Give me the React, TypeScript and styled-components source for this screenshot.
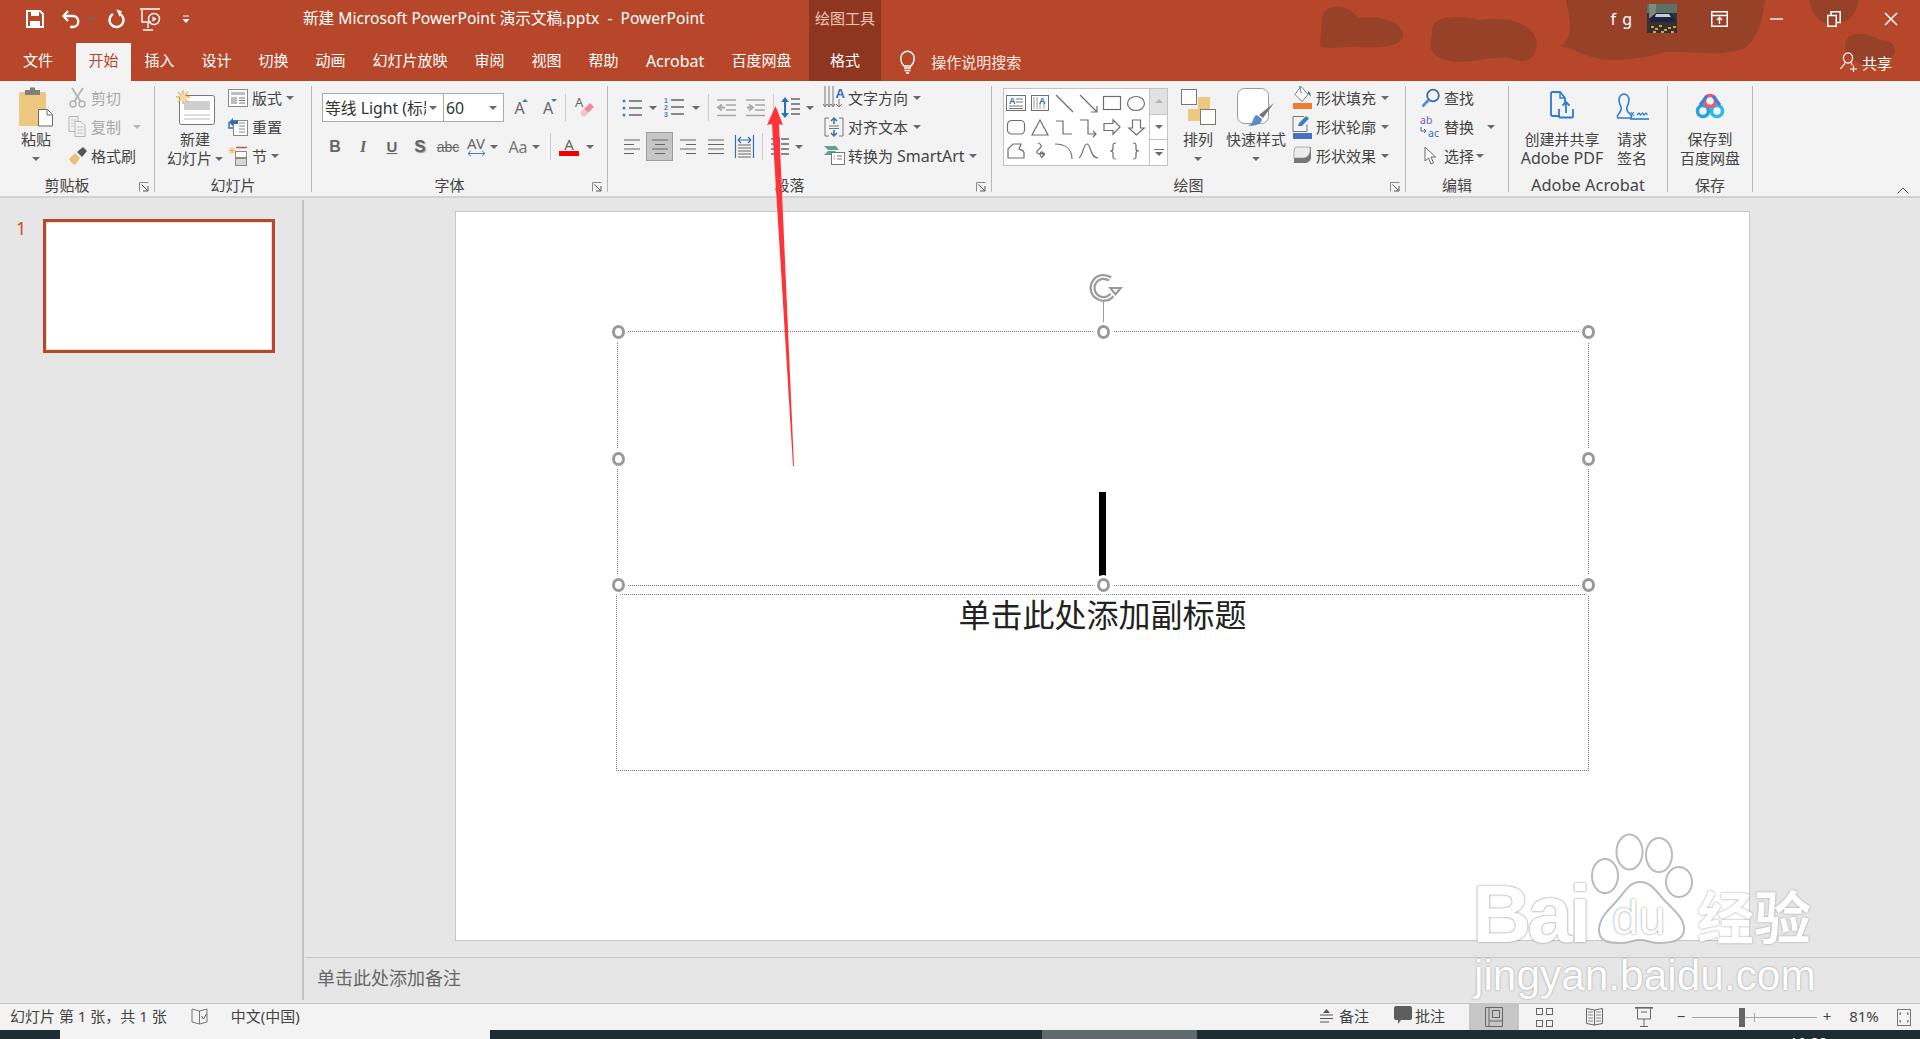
import React from "react";
import styled, { createGlobalStyle } from "styled-components";

const Global = createGlobalStyle`
  html, body { margin: 0; padding: 0; height: 100%; overflow: hidden; background: #e6e6e6; }
  #root { height: 100%; }
  * { box-sizing: border-box; }
`;

const Page = styled.div`
  position: relative; width: 100%; height: 100vh; display: flex; flex-direction: column; overflow: hidden;
  font-family: "Noto Sans", "Noto Sans CJK SC", sans-serif; font-size: 15px; color: #444;
`;
const Header = styled.header`position: relative; height: 81px; background: #b7472a; color: #fff; flex: none;`;
const HeaderArt = styled.svg`position: absolute; left: 0; top: 0; width: 100%; height: 81px;`;
const TitleRow = styled.div`position: relative; height: 43px; display: flex; align-items: stretch;`;
const Qat = styled.div`width: 303px; display: flex; align-items: center; padding-left: 26px; padding-bottom: 5px;`;
const QatSlot = styled.span<{ $ml?: number }>`margin-left: ${(p) => p.$ml ?? 0}px; display: flex; flex: none;`;
const TitleText = styled.div`width: 506px; font-size: 15.6px; line-height: 37px; white-space: pre;`;
const ContextLabel = styled.div`width: 72px; background: #8f3620; color: #f2c7b8; text-align: center; line-height: 37px; font-size: 15px;`;
const Spacer = styled.div`flex: 1;`;
const Account = styled.div`display: flex; align-items: center; padding-bottom: 6px; font-size: 16px;`;
const AccountName = styled.span`margin-right: 14px; letter-spacing: 1px;`;
const WinControls = styled.div`display: flex; margin-left: 14px; padding-right: 1px; padding-bottom: 6px;`;
const WinBtn = styled.div`width: 57px; display: flex; align-items: center; justify-content: center;`;
const TabRow = styled.nav`position: relative; height: 38px; display: flex; align-items: stretch;`;
const Tab = styled.div<{ $active?: boolean; $context?: boolean; $w?: number; $ml?: number; $latin?: boolean }>`
  display: flex; align-items: center; justify-content: center; white-space: nowrap; line-height: 1;
  padding: 0 13.5px 3px; font-size: ${(p) => (p.$latin ? 16 : 15)}px;
  ${(p) => (p.$w ? `width:${p.$w}px; padding:0 0 3px;` : "")}
  ${(p) => (p.$ml ? `margin-left:${p.$ml}px;` : "")}
  ${(p) => (p.$active ? "background:#f3f3f3;color:#b7472a;" : "")}
  ${(p) => (p.$context ? "background:#8f3620;" : "")}
`;
const TellMe = styled.div`display: flex; align-items: center; margin-left: 19px; padding-bottom: 1px; gap: 16px; font-size: 15px; color: #fbe9e2;`;
const ShareBtn = styled.div`display: flex; align-items: center; gap: 4px; margin-left: auto; padding-right: 28px; font-size: 15px;`;

const Ribbon = styled.section`height: 117px; flex: none; background: #f3f3f3; border-bottom: 2px solid #d2d2d2; display: flex; position: relative;`;
const Group = styled.div<{ $w: number }>`width: ${(p) => p.$w}px; flex: none; display: flex; flex-direction: column; height: 115px;`;
const GroupBody = styled.div<{ $pl?: number }>`height: 93px; flex: none; display: flex; align-items: flex-start; padding-left: ${(p) => p.$pl ?? 0}px;`;
const GroupFoot = styled.div`flex: 1; display: flex; align-items: center; height: 22px;`;
const GroupLabel = styled.div<{ $latin?: boolean }>`flex: 1; text-align: center; font-size: ${(p) => (p.$latin ? 16.4 : 15)}px; line-height: 20px; white-space: nowrap; margin-top: -1px;`;
const LauncherSlot = styled.div`width: 20px; display: flex; justify-content: center; padding-top: 3px; flex: none;`;
const Sep = styled.div`width: 1px; height: 106px; margin-top: 5px; background: #b9b9b9; flex: none;`;

const LargeBtn = styled.div<{ $w: number; $ml?: number }>`
  width: ${(p) => p.$w}px; margin-left: ${(p) => p.$ml ?? 0}px; flex: none;
  display: flex; flex-direction: column; align-items: center; padding-top: 3px;
`;
const LargeIcon = styled.div`height: 46px; display: flex; align-items: center; justify-content: center;`;
const Line = styled.div`height: 19px; line-height: 19px; font-size: 15px; white-space: nowrap; display: flex; align-items: center; color: #444;`;
const Latin = styled.span`font-size: 16px;`;
const SmallCol = styled.div<{ $ml?: number }>`margin-left: ${(p) => p.$ml ?? 0}px; padding-top: 2px; display: flex; flex-direction: column; flex: none;`;
const SmallRow = styled.div<{ $dim?: boolean }>`height: 29px; display: flex; align-items: center; gap: 4px; font-size: 15px; white-space: nowrap; color: ${(p) => (p.$dim ? "#a8a8a8" : "#444")};`;
const IconSlot = styled.span<{ $w?: number }>`width: ${(p) => p.$w ?? 20}px; display: flex; justify-content: center; align-items: center; flex: none;`;
const Caret = styled.i<{ $ml?: number; $dim?: boolean }>`
  display: inline-block; width: 0; height: 0; flex: none; margin-left: ${(p) => p.$ml ?? 0}px;
  border-left: 4px solid transparent; border-right: 4px solid transparent;
  border-top: 4px solid ${(p) => (p.$dim ? "#b5b5b5" : "#6a6a6a")};
`;
const ToolStack = styled.div`display: flex; flex-direction: column; padding-top: 12px; gap: 10px; flex: none;`;
const ToolRow = styled.div`height: 29px; display: flex; align-items: center;`;
const Tool = styled.span<{ $w: number; $ml?: number }>`
  width: ${(p) => p.$w}px; margin-left: ${(p) => p.$ml ?? 0}px; height: 29px; flex: none;
  display: flex; align-items: center; justify-content: center; position: relative; color: #666;
`;
const ToolOn = styled(Tool)`background: #c6c6c6; border: 1px solid #9c9c9c;`;
const ToolSep = styled.span<{ $ml: number }>`width: 1px; height: 27px; background: #c9c9c9; margin-left: ${(p) => p.$ml}px; flex: none;`;
const Combo = styled.div<{ $w: number }>`
  width: ${(p) => p.$w}px; height: 29px; background: #fff; border: 1px solid #ababab; flex: none; margin-right: -1px;
  display: flex; align-items: center; justify-content: space-between; padding: 0 6px 0 2px; font-size: 15.8px; color: #333; white-space: nowrap; overflow: hidden;
`;
const ComboText = styled.span`display: block; overflow: hidden; flex: 1;`;
const FaceB = styled.span`font: bold 16px "Liberation Sans", sans-serif; color: #666;`;
const FaceI = styled.span`font: italic bold 16px "Liberation Serif", serif; color: #666;`;
const FaceU = styled.span`font: bold 15px "Liberation Sans", sans-serif; color: #666; text-decoration: underline;`;
const FaceS = styled.span`font: bold 17px "Liberation Sans", sans-serif; color: #666; text-shadow: 1px 1px 1px #999;`;
const FaceAbc = styled.span`font: 14px "Liberation Sans", sans-serif; color: #666; text-decoration: line-through;`;
const FaceAa = styled.span`font: 16px "Noto Sans", sans-serif; color: #777;`;
const FaceGrow = styled.span`font: 16px "Noto Sans", sans-serif; color: #666;`;
const FaceColumn = styled.span`display: flex; flex-direction: column; align-items: center; font: 15px/14px "Noto Sans", sans-serif; color: #666;`;
const RedBar = styled.span`display: block; width: 20px; height: 5px; background: #f00000;`;
const BlueTri = styled.i<{ $down?: boolean }>`
  position: absolute; top: 6px; left: 60%; width: 0; height: 0;
  border-left: 3px solid transparent; border-right: 3px solid transparent;
  ${(p) => (p.$down ? "border-top: 3px solid #3f78b5;" : "border-bottom: 3px solid #3f78b5;")}
`;
const Gallery = styled.div`width: 165px; height: 78px; margin-top: 7px; display: flex; background: #fff; border: 1px solid #c4c4c4; flex: none;`;
const GalleryGrid = styled.div`width: 145px; padding: 2px 0 0 0; display: grid; grid-template-columns: repeat(6, 24px); grid-auto-rows: 24px; justify-items: center; align-items: center;`;
const GalleryScroll = styled.div`flex: 1; display: flex; flex-direction: column; border-left: 1px solid #c4c4c4;`;
const ScrollBtn = styled.div<{ $off?: boolean }>`
  flex: 1; display: flex; flex-direction: column; gap: 2px; align-items: center; justify-content: center;
  border-top: 1px solid #c4c4c4; &:first-child { border-top: 0; }
  ${(p) => (p.$off ? "background:#e2e2e2;" : "")}
`;
const UpCaret = styled.i`width: 0; height: 0; border-left: 4px solid transparent; border-right: 4px solid transparent; border-bottom: 4px solid #b5b5b5;`;
const BarMark = styled.i`width: 10px; height: 1px; background: #777;`;
const CollapseBtn = styled.div`position: absolute; right: 11px; bottom: 2px;`;

const Workspace = styled.div`flex: 1; display: flex; min-height: 0; background: #e6e6e6;`;
const ThumbPane = styled.aside`width: 302px; flex: none; display: flex; align-items: flex-start; padding-top: 21px;`;
const ThumbNum = styled.div`width: 27px; margin-left: 16px; color: #c9502e; font-size: 18px; line-height: 18px;`;
const Thumb = styled.div`width: 232px; height: 134px; background: #fff; border: 3px solid #b7472a; box-shadow: inset 0 0 0 1px #e0e0e0;`;
const PaneDivider = styled.div`width: 2px; margin: 2px 0 3px; background: #c4c4c4; flex: none;`;
const EditPane = styled.main`flex: 1; display: flex; flex-direction: column; min-width: 0;`;
const SlideArea = styled.div`flex: 1; padding: 13px 0 0 151px; min-height: 0;`;
const Slide = styled.div`position: relative; width: 1295px; height: 730px; background: #fff; border: 1px solid #c6c6c6;`;
const Placeholder = styled.div<{ $l: number; $t: number; $w: number; $h: number }>`
  position: absolute; left: ${(p) => p.$l}px; top: ${(p) => p.$t}px; width: ${(p) => p.$w}px; height: ${(p) => p.$h}px;
  border: 1px dotted #777;
`;
const SubtitleText = styled.div`text-align: center; font-size: 32px; line-height: 40px; color: #222;`;
const TextCursor = styled.div`position: absolute; left: 481px; top: 160px; width: 7px; height: 85px; background: #000;`;
const Handle = styled.i<{ $x: number; $y: number }>`
  position: absolute; left: ${(p) => p.$x}%; top: ${(p) => p.$y}%; width: 13px; height: 14px; margin: -7px 0 0 -6px;
  background: #fff; border: 3px solid #999; border-radius: 50%; box-shadow: 0 0 0 3px #fff;
`;
const RotateStem = styled.i`position: absolute; left: 485px; top: -31px; width: 1px; height: 26px; background: #9a9a9a;`;
const RotateGrip = styled.span`position: absolute; left: 472px; top: -58px; display: flex;`;
const Notes = styled.div`height: 46px; flex: none; border-top: 1px solid #c6c6c6; margin-left: 1px; padding-left: 12px; font-size: 18px; line-height: 40px; color: #666;`;

const StatusBar = styled.footer`height: 27px; flex: none; background: #f3f3f3; border-top: 1px solid #c6c6c6; display: flex; align-items: stretch; font-size: 15px; color: #444;`;
const StatusItem = styled.div<{ $ml?: number; $gap?: number; $w?: number; $text?: boolean }>`
  display: flex; align-items: center; flex: none; white-space: pre; margin-left: ${(p) => p.$ml ?? 0}px; gap: ${(p) => p.$gap ?? 0}px;
  ${(p) => (p.$w ? `width:${p.$w}px; justify-content:center;` : "")}
  ${(p) => (p.$text ? "padding-bottom: 3px;" : "")}
`;
const ViewBtn = styled.div<{ $active?: boolean }>`width: 50px; height: 100%; display: flex; align-items: center; justify-content: center; flex: none; ${(p) => (p.$active ? "background:#c6c6c6;" : "")}`;
const ZoomTrack = styled.div`width: 125px; height: 1px; background: #a8a8a8; position: relative; align-self: center; margin-left: 6px; flex: none;`;
const ZoomThumb = styled.i`position: absolute; left: 47px; top: -9px; width: 6px; height: 19px; background: #666;`;
const ZoomTick = styled.i`position: absolute; left: 62px; top: -4px; width: 1px; height: 9px; background: #aaa;`;
const Taskbar = styled.div`height: 9px; flex: none; background: #1e2c34; display: flex; position: relative;`;
const TaskSeg = styled.div<{ $w: number; $ml: number; $bg: string }>`width: ${(p) => p.$w}px; margin-left: ${(p) => p.$ml}px; background: ${(p) => p.$bg}; flex: none;`;
const Clock = styled.span`position: absolute; left: 1790px; top: 5px; color: #fff; font-size: 13px; line-height: 14px; letter-spacing: 1px;`;

const ArrowOverlay = styled.svg`position: absolute; left: 760px; top: 100px; pointer-events: none;`;
const Watermark = styled.div`position: absolute; left: 1470px; top: 830px; width: 360px; height: 170px; pointer-events: none; color: #fff;`;
const WmPaw = styled.svg`position: absolute; left: 0; top: 0;`;
const WmBai = styled.span`position: absolute; left: 2px; top: 43px; font: bold 82px/82px "Liberation Sans", sans-serif; letter-spacing: -4px; text-shadow: 0 0 2px #888, 0 0 1px #999;`;
const WmDu = styled.span`position: absolute; left: 142px; top: 64px; font: 48px/48px "Liberation Sans", sans-serif; color: #fff; text-shadow: 0 0 2px #777;`;
const WmJing = styled.span`position: absolute; left: 227px; top: 48px; font: bold 57px/72px "Noto Sans CJK SC", sans-serif; text-shadow: 0 0 2px #888; white-space: nowrap;`;
const WmUrl = styled.span`position: absolute; left: 4px; top: 122px; font: 42.4px/48px "Liberation Sans", sans-serif; white-space: nowrap; text-shadow: 0 0 2px #888;`;

const SvgBase = styled.svg`display: block; flex: none; overflow: visible;`;
const I: React.FC<{ w: number; h: number; children: React.ReactNode }> = ({ w, h, children }) => (
  <SvgBase width={w} height={h} viewBox={`0 0 ${w} ${h}`} fill="none">{children}</SvgBase>
);

const IconSave = () => (
  <I w={18} h={18}>
    <path d="M1 1h13l3 3v13H1z" stroke="#fff" strokeWidth="2" />
    <path d="M5 1h8v5H5z" fill="#fff" />
    <path d="M4 11h10v6H4z" fill="#fff" />
  </I>
);
const IconUndo = () => (
  <I w={20} h={20}>
    <path d="M7 2L2.5 7 7 12" stroke="#fff" strokeWidth="2.4" />
    <path d="M3 7h9c7 0 7 11 0 11H9" stroke="#fff" strokeWidth="2.4" />
  </I>
);
const IconRedo = () => (
  <I w={17} h={20}>
    <path d="M6 5A7 7 0 1 0 12 4.5" stroke="#fff" strokeWidth="2.4" />
    <path d="M8 1h6v6z" fill="#fff" transform="rotate(20 11 4)" />
  </I>
);
const IconShow = () => (
  <I w={21} h={23}>
    <path d="M0 1h20M2 1v13h9" stroke="#fff" strokeWidth="1.4" />
    <circle cx="14" cy="11" r="5.5" stroke="#fff" strokeWidth="1.4" />
    <path d="M12.5 8.2l4 2.8-4 2.8z" fill="#fff" />
    <path d="M8 15v5M3 22h10" stroke="#fff" strokeWidth="1.4" />
  </I>
);
const IconCustom = () => (
  <I w={10} h={9}>
    <path d="M2 1h6" stroke="#fff" />
    <path d="M1.5 4h7L5 8z" fill="#fff" />
  </I>
);
const IconRibbonDisp = () => (
  <I w={17} h={16}>
    <rect x=".75" y=".75" width="15.5" height="14.5" stroke="#fff" strokeWidth="1.5" />
    <path d="M1 4.5h15" stroke="#fff" strokeWidth="1.5" />
    <path d="M8.5 13V7M6 9l2.5-2.5L11 9" stroke="#fff" strokeWidth="1.4" />
  </I>
);
const IconMin = () => <I w={13} h={2}><path d="M0 1h13" stroke="#fff" strokeWidth="1.4" /></I>;
const IconRestore = () => (
  <I w={14} h={16}>
    <path d="M.75 4.5h8.5v10.7H.75z" stroke="#fff" strokeWidth="1.5" />
    <path d="M4 4.5V.75h9.2v10.7h-4" stroke="#fff" strokeWidth="1.5" />
  </I>
);
const IconClose = () => <I w={14} h={14}><path d="M1 1l12 12M13 1L1 13" stroke="#fff" strokeWidth="1.5" /></I>;
const IconBulb = () => (
  <I w={15} h={24}>
    <path d="M4 16C1 13 .8 11 .8 8a6.7 6.7 0 0 1 13.4 0c0 3-.2 5-3.2 8z" stroke="#fff" strokeWidth="1.4" />
    <path d="M4 18h7M4.5 20.5h6M6 23h3" stroke="#fff" strokeWidth="1.4" />
  </I>
);
const IconShare = () => (
  <I w={18} h={20}>
    <ellipse cx="8" cy="6" rx="4.6" ry="5.2" stroke="#fff" strokeWidth="1.2" />
    <path d="M5 10.5c-.5 3-3 3.5-4.5 6.5M11 10.5c.2 1 .7 1.8 1.3 2.5" stroke="#fff" strokeWidth="1.2" />
    <path d="M10 17h7M13.5 13.5v6.5" stroke="#fff" strokeWidth="1.2" />
  </I>
);

const IconPaste = () => (
  <I w={36} h={40}>
    <rect x="1" y="5" width="27" height="34" rx="1.5" fill="#edc87e" />
    <path d="M7 5V3h5V.5h5V3h5v5H7z" fill="#7f7f7f" />
    <path d="M20.5 22.5h9l5 5v11.5h-14z" fill="#fff" stroke="#6a6a6a" />
    <path d="M29 23v5h5" stroke="#6a6a6a" />
  </I>
);
const IconCut = () => (
  <I w={17} h={21}>
    <path d="M3 1l9 14M14 1L5 15" stroke="#b4b4b4" strokeWidth="1.8" />
    <circle cx="4" cy="17" r="3" stroke="#b4b4b4" strokeWidth="1.5" />
    <circle cx="13" cy="17" r="3" stroke="#b4b4b4" strokeWidth="1.5" />
  </I>
);
const IconCopy = () => (
  <I w={18} h={21}>
    <path d="M1 .5h9v15H1z" fill="#f3f3f3" stroke="#b4b4b4" />
    <path d="M7 5.5h6l4 4V20.5H7z" fill="#f3f3f3" stroke="#b4b4b4" />
    <path d="M3 4h5M3 7h3M3 10h3M9 11h6M9 14h6M9 17h6" stroke="#c4c4c4" />
  </I>
);
const IconPainter = () => (
  <I w={19} h={20}>
    <path d="M1 13l6-6 5 5-5 7c-2-1-5-3-6-6z" fill="#e8c27c" />
    <path d="M9 6l6-5 4 4-5 6z" fill="#555" />
  </I>
);
const IconNewSlide = () => (
  <I w={39} h={35}>
    <rect x="3.5" y="5.5" width="35" height="29" rx="2" fill="#fff" stroke="#777" />
    <path d="M8 11h26v9H8z" fill="#cfcfcf" />
    <path d="M8 25h26M8 29h26" stroke="#bbb" />
    <g stroke="#eeb75e" strokeWidth="1.5">
      <path d="M7 0v14M0 7h14M2 2l10 10M12 2L2 12" />
    </g>
    <circle cx="7" cy="7" r="3" fill="#f7dba8" />
  </I>
);
const IconLayout = () => (
  <I w={20} h={18}>
    <rect x=".5" y=".5" width="19" height="17" fill="#fff" stroke="#888" />
    <path d="M3 3h14v3H3zM3 8h6v7H3z" fill="#bdbdbd" />
    <path d="M11 9h6M11 11.5h6M11 14h6" stroke="#777" />
  </I>
);
const IconReset = () => (
  <I w={20} h={19}>
    <rect x="5.5" y="3.5" width="14" height="15" fill="#fff" stroke="#888" />
    <path d="M11 6h6M11 9h6M11 12h6M11 15h6" stroke="#888" />
    <path d="M1 5l4-4v2.5h5V7H5v2.5z" fill="#2f6fb3" />
    <path d="M1 5v6h4" stroke="#2f6fb3" strokeWidth="1.5" />
  </I>
);
const IconSection = () => (
  <I w={20} h={20}>
    <g stroke="#eeb75e"><path d="M4 1v7M.5 4.5h7M1.5 2l5 5M6.5 2l-5 5" /></g>
    <path d="M8 1.5h11" stroke="#c8553a" strokeWidth="1.5" />
    <rect x="7.5" y="5.5" width="11" height="6" fill="#fff" stroke="#888" />
    <rect x="7.5" y="12.5" width="11" height="7" fill="#d8d8d8" stroke="#888" />
  </I>
);
const IconClear = () => (
  <I w={20} h={23}>
    <text x="1" y="11" fontSize="13" fill="#666" fontFamily="Noto Sans">A</text>
    <path d="M7 16l9-9 4 4-9 9c-2 1-4-1-4-4z" fill="#ec8c9c" />
    <path d="M7 16l3-3 5 4-4 3c-2 1-4 0-4-4z" fill="#f5c6cc" />
  </I>
);
const Launcher = () => (
  <I w={10} h={10}>
    <path d="M.5 9.5V.5h9" stroke="#8a8a8a" />
    <path d="M2.5 2.5l6 6M4 9h5V4" stroke="#555" />
  </I>
);
const listLines = (x: number) => (
  <path d={`M${x} 2h13M${x} 9h13M${x} 16h13`} stroke="#666" strokeWidth="1.3" />
);
const IconBullets = () => (
  <I w={20} h={18}>
    <g fill="#3e7fc1"><circle cx="2" cy="2" r="1.5" /><circle cx="2" cy="9" r="1.5" /><circle cx="2" cy="16" r="1.5" /></g>
    {listLines(7)}
  </I>
);
const IconNumbers = () => (
  <I w={20} h={19}>
    <g fill="#3e7fc1" fontSize="7" fontFamily="Liberation Sans" fontWeight="bold">
      <text x="0" y="5">1</text><text x="0" y="12">2</text><text x="0" y="19">3</text>
    </g>
    {listLines(7)}
  </I>
);
const IconIndent = ({ flip }: { flip?: boolean }) => (
  <I w={19} h={18}>
    <path d="M0 1h19M9 6h10M9 11h10M0 16.5h19" stroke="#a8a8a8" strokeWidth="1.3" />
    <path d={flip ? "M1 8.5h4M3 5.5l4 3-4 3" : "M8 8.5H3M5 5.5l-4 3 4 3"} stroke="#a8a8a8" strokeWidth="1.8" />
  </I>
);
const IconLineSpacing = () => (
  <I w={19} h={23}>
    <path d="M4 1L0 6h8zM4 22L0 17h8z" fill="#2f6fb3" />
    <path d="M4 5v13" stroke="#2f6fb3" strokeWidth="2" />
    <path d="M10 3h9M10 8h9M10 13h9M10 18h9" stroke="#666" strokeWidth="1.3" />
  </I>
);
const IconAlign = ({ kind }: { kind: "l" | "c" | "r" | "j" }) => {
  const rows = [0, 1, 2, 3].map((i) => {
    const w = kind === "j" ? 16 : i % 2 ? 10 : 16;
    const x = kind === "c" ? (16 - w) / 2 : kind === "r" ? 16 - w : 0;
    return `M${x} ${1 + i * 4.5}h${w}`;
  });
  return <I w={16} h={16}><path d={rows.join("")} stroke="#666" strokeWidth="1.2" /></I>;
};
const IconDistribute = () => (
  <I w={19} h={23}>
    <path d="M.5 0v23M18.5 0v23" stroke="#2f6fb3" strokeWidth="1.2" />
    <path d="M3 5h13M3 5l3-3M3 5l3 3M16 5l-3-3M16 5l-3 3" stroke="#2f6fb3" strokeWidth="1.2" />
    <path d="M3 10h13M3 13h13M3 16h13M3 19h13M3 22h13" stroke="#666" />
  </I>
);
const IconColumns = () => (
  <I w={18} h={17}>
    <path d="M0 1h7M0 6h7M0 11h7M0 16h7" stroke="#3e7fc1" strokeWidth="1.3" />
    <path d="M10 1h8M10 6h8M10 11h8M10 16h8" stroke="#666" strokeWidth="1.3" />
    <path d="M8.5 0v17" stroke="#777" />
  </I>
);
const IconTextDir = () => (
  <I w={20} h={23}>
    <path d="M1 0v20M5 0v20M9 0v20" stroke="#777" />
    <path d="M-1 18l2 3 2-3M3 18l2 3 2-3M7 18l2 3 2-3M12 18l3 3 3-3" stroke="#777" />
    <text x="11.5" y="12" fontSize="13" fontWeight="bold" fill="#2f6fb3" fontFamily="Liberation Sans">A</text>
    <path d="M15 13v7" stroke="#777" />
  </I>
);
const IconAlignText = () => (
  <I w={20} h={20}>
    <path d="M5 1H1v18h4M15 1h4v18h-4" stroke="#777" />
    <path d="M10 2v5M10 13v5" stroke="#2f6fb3" strokeWidth="1.5" />
    <path d="M7 4l3-3 3 3M7 16l3 3 3-3" stroke="#2f6fb3" strokeWidth="1.5" />
    <path d="M5 9h10M5 11.5h10" stroke="#777" />
  </I>
);
const IconSmartArt = () => (
  <I w={21} h={19}>
    <path d="M0 0h12l3 4H4zM0 9h9l3-4H4z" fill="#5ea293" />
    <rect x="7.5" y="6.5" width="13" height="12" fill="#fff" stroke="#777" />
    <path d="M10 10h1M13 10h5M10 13h1M13 13h5" stroke="#777" />
  </I>
);
const IconFill = () => (
  <I w={20} h={24}>
    <path d="M9 .5l7 8-6 7-7-7z" fill="#fff" stroke="#777" />
    <path d="M7 0c1 2 2 4 2 7" stroke="#777" />
    <path d="M16 5c2 1 3 3 2.5 6-.5-1-1.5-3-2.5-3z" fill="#2f6fb3" />
    <path d="M1 17h19v6H1z" fill="#ed7d31" />
  </I>
);
const IconOutline = () => (
  <I w={20} h={24}>
    <path d="M12 1.5H1v15h14v-7" stroke="#777" />
    <path d="M6 11l1-3L14 1l3 2.5-7 7.5z" fill="#3e7fc1" />
    <path d="M1 18h19v6H1z" fill="#4472c4" />
  </I>
);
const IconEffect = () => (
  <I w={19} h={19}>
    <path d="M4 1h14v10c0 4-3 6-7 6H1V6c0-3 1-5 3-5z" fill="#777" />
    <path d="M4 1h13c1 5-1 10-6 11H1V6c0-3 1-5 3-5z" fill="#ececec" stroke="#888" strokeWidth=".6" />
  </I>
);
const IconFind = () => (
  <I w={19} h={20}>
    <circle cx="12" cy="7.5" r="5.8" stroke="#2f6fb3" strokeWidth="1.8" />
    <path d="M7.5 12L1.5 18.5" stroke="#5c8ec2" strokeWidth="2.8" />
  </I>
);
const IconReplace = () => (
  <I w={21} h={21}>
    <text x="0" y="8" fontSize="10.5" fill="#7a5ba6" fontFamily="Noto Sans">ab</text>
    <text x="8" y="21" fontSize="10.5" fill="#2f6fb3" fontFamily="Noto Sans">ac</text>
    <path d="M1 11v4h5M4 13l2 2-2 2" stroke="#2f6fb3" />
  </I>
);
const IconSelect = () => (
  <I w={12} h={19}>
    <path d="M1 1v14l3.5-3L7 18l2.5-1.2L7 11h4.5z" fill="#fff" stroke="#666" />
  </I>
);
const IconArrange = () => (
  <I w={35} h={36}>
    <rect x="17" y="8" width="12" height="12" fill="#edc87e" />
    <rect x="7" y="20" width="12" height="12" fill="#edc87e" />
    <rect x=".5" y=".5" width="15" height="15" fill="#fff" stroke="#777" />
    <rect x="19.5" y="20.5" width="15" height="15" fill="#fff" stroke="#777" />
  </I>
);
const IconQuickStyle = () => (
  <I w={38} h={38}>
    <rect x=".5" y=".5" width="31" height="35" rx="7" fill="#fff" stroke="#999" />
    <path d="M37 15l-11 15-4-3z" fill="#777" />
    <path d="M20 27l5 4c0 4-4 7-14 7 3-2 4-3 5-6 1-3 2-5 4-5z" fill="#5a8dc4" />
  </I>
);
const IconPdf = () => (
  <I w={24} h={32}>
    <path d="M10 25H2.5C1.5 25 1 24.5 1 23.5V2.5C1 1.5 1.5 1 2.5 1H10l5 6v6" stroke="#2b7cd3" strokeWidth="1.8" />
    <path d="M10 1v6h5" stroke="#2b7cd3" strokeWidth="1.4" />
    <path d="M9 18v7.5c0 .5 .5 1 1 1h12c.5 0 1-.5 1-1V18" stroke="#2b7cd3" strokeWidth="1.8" />
    <path d="M16 22V11M12.5 14.5L16 11l3.5 3.5" stroke="#2b7cd3" strokeWidth="1.8" />
  </I>
);
const IconSign = () => (
  <I w={33} h={28}>
    <path d="M1 25h13c2 0 2-2 1-3l-3-3c-1-2-2-3-1-5 1-2 2-4 2-7 0-3-2-6-5-6S3 4 3 7c0 3 1 5 2 7 1 2 0 3-1 5l-2 3c-1 1-1 3 1 3" stroke="#2b7cd3" strokeWidth="1.6" />
    <path d="M14 26h19" stroke="#2b7cd3" strokeWidth="1.6" />
    <text x="14" y="23" fontSize="8" fill="#2b7cd3" fontFamily="Liberation Sans" fontWeight="bold">x</text>
    <path d="M21 22l2-2 1.5 2 2-2 1.5 2 2-2 1.5 2" stroke="#2b7cd3" strokeWidth="1.2" />
  </I>
);
const IconCloud = () => (
  <I w={28} h={28}>
    <circle cx="7" cy="18" r="5.5" stroke="#25a3e4" strokeWidth="3.6" />
    <circle cx="21" cy="18" r="5.5" stroke="#2fb9e6" strokeWidth="3.6" />
    <circle cx="14" cy="8" r="5.5" stroke="#f0596b" strokeWidth="3.6" />
    <path d="M4 12L11 3" stroke="#3c7fe0" strokeWidth="3" />
    <path d="M24 12L17 3" stroke="#3c7fe0" strokeWidth="3" />
  </I>
);
const IconChevron = () => <I w={12} h={7}><path d="M.5 6.5L6 1l5.5 5.5" stroke="#555" /></I>;

const sk = { stroke: "#6e6e6e", strokeWidth: 1.2 };
const shapes: React.ReactNode[] = [
  <I key="0" w={20} h={16}><rect x=".5" y=".5" width="19" height="15" stroke="#6e6e6e" /><text x="3" y="9" fontSize="9" fontWeight="bold" fill="#2f6fb3" fontFamily="Liberation Sans">A</text><path d="M10 4h7M10 7h7M3 11h14M3 13.5h14" stroke="#777" /></I>,
  <I key="1" w={18} h={16}><rect x=".5" y=".5" width="17" height="15" stroke="#6e6e6e" /><path d="M3 2v12M6 2v12M9 8v6M13 8v6" stroke="#999" /><text x="8" y="9" fontSize="9" fontWeight="bold" fill="#2f6fb3" fontFamily="Liberation Sans">A</text></I>,
  <I key="2" w={19} h={19}><path d="M1 1l17 17" {...sk} /></I>,
  <I key="3" w={19} h={19}><path d="M1 1l17 17M18 12v6h-6" {...sk} /></I>,
  <I key="4" w={18} h={14}><rect x=".5" y=".5" width="17" height="13" {...sk} /></I>,
  <I key="5" w={18} h={15}><ellipse cx="9" cy="7.5" rx="8.5" ry="7" {...sk} /></I>,
  <I key="6" w={18} h={15}><rect x=".5" y=".5" width="17" height="13.5" rx="4" {...sk} /></I>,
  <I key="7" w={18} h={17}><path d="M9 1L1 16h16z" {...sk} /></I>,
  <I key="8" w={18} h={15}><path d="M1 1h7v13h9" {...sk} /></I>,
  <I key="9" w={18} h={17}><path d="M1 1h8v14h8M14 12l3 3-3 3" {...sk} /></I>,
  <I key="10" w={18} h={16}><path d="M1 4.5h9V.8L17 8l-7 7.2V11.5H1z" {...sk} /></I>,
  <I key="11" w={17} h={17}><path d="M4.5 1h8v8h3.700L8.5 16 .8 9h3.700z" {...sk} /></I>,
  <I key="12" w={18} h={16}><path d="M1 15V6l5-5h8l-2 5c2 1 5 1 5 4v5z" {...sk} /></I>,
  <I key="13" w={13} h={18}><path d="M4 1c3 1 5 3 1 6-3 2-3 4 0 5 3 0 7-2 5 1-2 3-4 2-4-1 0-2 2-3 3-1 1 2-1 5-2 5" {...sk} /></I>,
  <I key="14" w={18} h={16}><path d="M0 1c9 0 17 4 17 15" {...sk} /></I>,
  <I key="15" w={19} h={16}><path d="M0 15C4 13 4 1 8 1s3 14 11 14" {...sk} /></I>,
  <I key="16" w={9} h={18}><path d="M8 1C5 1 5 2 5 4v3c0 1-1 2-3 2 2 0 3 1 3 2v3c0 2 0 3 3 3" {...sk} /></I>,
  <I key="17" w={9} h={18}><path d="M1 1c3 0 3 1 3 3v3c0 1 1 2 3 2-2 0-3 1-3 2v3c0 2 0 3-3 3" {...sk} /></I>,
];

const avatarDots = [[4, 22], [8, 24], [12, 21], [17, 25], [21, 23], [26, 22], [6, 27], [14, 27], [24, 27]];
const IconAvatar = () => (
  <I w={30} h={29}>
    <rect width="30" height="29" fill="#33312f" />
    <rect width="30" height="9" fill="#5f6f66" />
    <rect x="2" y="0" width="7" height="14" fill="#7a8c7d" />
    <path d="M3 14l6-5h14l5 5v4H3z" fill="#1c2440" />
    <path d="M9 10h13l2 3H8z" fill="#c5cad6" />
    {avatarDots.map(([x, y]) => <rect key={`${x}-${y}`} x={x} y={y} width="3" height="2" fill="#d99a42" />)}
  </I>
);
const IconBook = () => (
  <I w={18} h={18}>
    <path d="M8.5 3L1 1v13l7.5 2zM8.5 3L16 1v13l-7.5 2" stroke="#777" />
    <path d="M10.5 8l2 3 3-5" stroke="#555" />
  </I>
);
const IconNotesUp = () => (
  <I w={15} h={15}>
    <path d="M7.5 1L4 5h7z" fill="#555" />
    <path d="M1 7h13M1 10.5h13M1 14h9" stroke="#555" />
  </I>
);
const IconComment = () => (
  <I w={18} h={19}>
    <path d="M2 0h14c1 0 2 1 2 2v10c0 1-1 2-2 2H7l-3 4v-4H2c-1 0-2-1-2-2V2C0 1 1 0 2 0z" fill="#5e5e5e" />
  </I>
);
const ViewNormal = () => (
  <I w={18} h={20}>
    <path d="M.5 .5h17v19H.5zM4 .5v19M4 14h13.5" stroke="#666" />
    <rect x="7.5" y="3.5" width="7" height="7" stroke="#666" />
  </I>
);
const ViewGrid = () => (
  <I w={17} h={19}>
    <rect x=".5" y=".5" width="6" height="6" stroke="#666" /><rect x="10.5" y=".5" width="6" height="6" stroke="#666" />
    <rect x=".5" y="12.5" width="6" height="6" stroke="#666" /><rect x="10.5" y="12.5" width="6" height="6" stroke="#666" />
  </I>
);
const ViewRead = () => (
  <I w={17} h={20}>
    <path d="M.5 1.5l8 1.5 8-1.5v15l-8 1.5-8-1.5zM8.5 3v15" stroke="#666" />
    <path d="M2 5h5M2 8h5M2 11h5M2 14h5M10 5h5M10 8h5M10 11h5M10 14h5" stroke="#888" />
  </I>
);
const ViewShow = () => (
  <I w={18} h={20}>
    <path d="M0 .8h18" stroke="#666" strokeWidth="1.6" />
    <path d="M2.5 1v11h13V1M9 12v7M5 19.5h8M6 5h6" stroke="#666" />
  </I>
);
const IconFit = () => (
  <I w={14} h={17}>
    <rect x=".5" y=".5" width="13" height="16" stroke="#777" />
    <path d="M4 4H3v2M10 4h1v2M4 13H3v-2M10 13h1v-2" stroke="#555" />
  </I>
);
const IconRotate = () => (
  <I w={34} h={28}>
    <path d="M20 5A11 11 0 1 0 22 21" stroke="#9a9a9a" strokeWidth="6" />
    <path d="M20 5A11 11 0 1 0 22 21" stroke="#fff" strokeWidth="1.5" />
    <path d="M18 13h15l-7.5 9z" fill="#9a9a9a" />
    <path d="M22.5 15h6l-3 3.5z" fill="#fff" />
  </I>
);

const handleSpots: [number, number][] = [[0, 0], [50, 0], [100, 0], [0, 50], [100, 50], [0, 100], [50, 100], [100, 100]];

const GroupFrame: React.FC<{ w: number; label: string; launcher?: boolean; pl?: number; latin?: boolean; children: React.ReactNode }> = ({ w, label, launcher, pl, latin, children }) => (
  <>
    <Group $w={w}>
      <GroupBody $pl={pl}>{children}</GroupBody>
      <GroupFoot>
        <GroupLabel $latin={latin}>{label}</GroupLabel>
        {launcher && <LauncherSlot><Launcher /></LauncherSlot>}
      </GroupFoot>
    </Group>
    <Sep />
  </>
);

export default function App() {
  return (
    <Page>
      <Global />
      <Header>
        <HeaderArt viewBox="0 0 1920 81" preserveAspectRatio="none">
          <g fill="#974129">
            <path d="M1322 20C1322 5 1345 0 1358 18C1375 15 1403 20 1403 35C1403 47 1380 48 1360 47C1345 46 1330 50 1320 46Z" />
            <path d="M1432 30C1432 15 1460 15 1480 20C1510 15 1537 25 1537 45C1535 60 1525 65 1510 58C1490 55 1460 68 1440 58C1425 50 1432 40 1432 30Z" />
            <path d="M1566 0L1765 0C1762 20 1760 35 1745 48C1720 58 1690 50 1665 52C1640 60 1600 65 1575 50L1560 46C1575 38 1570 20 1566 0Z" />
            <path d="M1810 0C1810 15 1825 28 1835 25C1850 22 1858 12 1858 0Z" />
            <path d="M1845 45C1845 32 1865 30 1880 40C1900 40 1900 60 1880 63C1865 70 1845 60 1845 45Z" />
          </g>
        </HeaderArt>
        <TitleRow>
          <Qat>
            <QatSlot><IconSave /></QatSlot>
            <QatSlot $ml={17}><IconUndo /></QatSlot>
            <QatSlot $ml={6}><Caret /></QatSlot>
            <QatSlot $ml={12}><IconRedo /></QatSlot>
            <QatSlot $ml={16}><IconShow /></QatSlot>
            <QatSlot $ml={20}><IconCustom /></QatSlot>
          </Qat>
          <TitleText>新建 Microsoft PowerPoint 演示文稿.pptx  -  PowerPoint</TitleText>
          <ContextLabel>绘图工具</ContextLabel>
          <Spacer />
          <Account>
            <AccountName>f g</AccountName>
            <IconAvatar />
          </Account>
          <WinControls>
            <WinBtn><IconRibbonDisp /></WinBtn>
            <WinBtn><IconMin /></WinBtn>
            <WinBtn><IconRestore /></WinBtn>
            <WinBtn><IconClose /></WinBtn>
          </WinControls>
        </TitleRow>
        <TabRow>
          <Tab $w={76}>文件</Tab>
          <Tab $active $w={55}>开始</Tab>
          {["插入", "设计", "切换", "动画", "幻灯片放映", "审阅", "视图", "帮助"].map((t) => <Tab key={t}>{t}</Tab>)}
          <Tab $w={86} $latin>Acrobat</Tab>
          <Tab $w={87}>百度网盘</Tab>
          <Tab $context $w={72} $ml={4}>格式</Tab>
          <TellMe><IconBulb />操作说明搜索</TellMe>
          <ShareBtn><IconShare />共享</ShareBtn>
        </TabRow>
      </Header>

      <Ribbon>
        <GroupFrame w={154} label="剪贴板" launcher>
          <LargeBtn $w={50} $ml={11}>
            <LargeIcon><IconPaste /></LargeIcon>
            <Line>粘贴</Line>
            <Line><Caret /></Line>
          </LargeBtn>
          <SmallCol $ml={6}>
            <SmallRow $dim><IconSlot><IconCut /></IconSlot>剪切</SmallRow>
            <SmallRow $dim><IconSlot><IconCopy /></IconSlot>复制<Caret $dim $ml={8} /></SmallRow>
            <SmallRow><IconSlot><IconPainter /></IconSlot>格式刷</SmallRow>
          </SmallCol>
        </GroupFrame>
        <GroupFrame w={156} label="幻灯片">
          <LargeBtn $w={62} $ml={9}>
            <LargeIcon><IconNewSlide /></LargeIcon>
            <Line>新建</Line>
            <Line>幻灯片<Caret $ml={3} /></Line>
          </LargeBtn>
          <SmallCol $ml={2}>
            <SmallRow><IconSlot><IconLayout /></IconSlot>版式<Caret $ml={0} /></SmallRow>
            <SmallRow><IconSlot><IconReset /></IconSlot>重置</SmallRow>
            <SmallRow><IconSlot><IconSection /></IconSlot>节<Caret $ml={0} /></SmallRow>
          </SmallCol>
        </GroupFrame>
        <GroupFrame w={295} label="字体" launcher pl={10}>
          <ToolStack>
            <ToolRow>
              <Combo $w={122}><ComboText>等线 Light (标题)</ComboText><Caret $ml={3} /></Combo>
              <Combo $w={61}><ComboText>60</ComboText><Caret /></Combo>
              <Tool $w={29} $ml={2}><FaceGrow>A</FaceGrow><BlueTri /></Tool>
              <Tool $w={28}><FaceGrow>A</FaceGrow><BlueTri $down /></Tool>
              <ToolSep $ml={3} />
              <Tool $w={36}><IconClear /></Tool>
            </ToolRow>
            <ToolRow>
              <Tool $w={26}><FaceB>B</FaceB></Tool>
              <Tool $w={30}><FaceI>I</FaceI></Tool>
              <Tool $w={28}><FaceU>U</FaceU></Tool>
              <Tool $w={28}><FaceS>S</FaceS></Tool>
              <Tool $w={28}><FaceAbc>abc</FaceAbc></Tool>
              <Tool $w={28}>
                <FaceColumn>AV
                  <I w={19} h={7}><path d="M1 3.5h17M4 .8L1 3.5l3 2.7M15 .8l3 2.7-3 2.7" stroke="#3e7fc1" /></I>
                </FaceColumn>
              </Tool>
              <Caret />
              <Tool $w={32} $ml={4}><FaceAa>Aa</FaceAa></Tool>
              <Caret $ml={-2} />
              <ToolSep $ml={10} />
              <Tool $w={36}><FaceColumn>A<RedBar /></FaceColumn></Tool>
              <Caret $ml={-1} />
            </ToolRow>
          </ToolStack>
        </GroupFrame>
        <GroupFrame w={383} label="段落" launcher pl={12}>
          <ToolStack>
            <ToolRow>
              <Tool $w={24}><IconBullets /></Tool>
              <Caret $ml={5} />
              <Tool $w={24} $ml={5}><IconNumbers /></Tool>
              <Caret $ml={6} />
              <ToolSep $ml={8} />
              <Tool $w={24} $ml={5}><IconIndent /></Tool>
              <Tool $w={24} $ml={5}><IconIndent flip /></Tool>
              <ToolSep $ml={6} />
              <Tool $w={24} $ml={4}><IconLineSpacing /></Tool>
              <Caret $ml={4} />
            </ToolRow>
            <ToolRow>
              <Tool $w={24}><IconAlign kind="l" /></Tool>
              <ToolOn $w={27} $ml={2}><IconAlign kind="c" /></ToolOn>
              <Tool $w={24} $ml={3}><IconAlign kind="r" /></Tool>
              <Tool $w={24} $ml={4}><IconAlign kind="j" /></Tool>
              <Tool $w={24} $ml={4}><IconDistribute /></Tool>
              <ToolSep $ml={6} />
              <Tool $w={24} $ml={5}><IconColumns /></Tool>
              <Caret $ml={3} />
            </ToolRow>
          </ToolStack>
          <SmallCol $ml={10}>
            <SmallRow><IconSlot><IconTextDir /></IconSlot>文字方向<Caret $ml={1} /></SmallRow>
            <SmallRow><IconSlot><IconAlignText /></IconSlot>对齐文本<Caret $ml={1} /></SmallRow>
            <SmallRow><IconSlot><IconSmartArt /></IconSlot><span>转换为 <Latin>SmartArt</Latin></span><Caret $ml={0} /></SmallRow>
          </SmallCol>
        </GroupFrame>
        <GroupFrame w={413} label="绘图" launcher pl={11}>
          <Gallery>
            <GalleryGrid>{shapes}</GalleryGrid>
            <GalleryScroll>
              <ScrollBtn $off><UpCaret /></ScrollBtn>
              <ScrollBtn><Caret /></ScrollBtn>
              <ScrollBtn><BarMark /><Caret /></ScrollBtn>
            </GalleryScroll>
          </Gallery>
          <LargeBtn $w={44} $ml={8}>
            <LargeIcon><IconArrange /></LargeIcon>
            <Line>排列</Line>
            <Line><Caret /></Line>
          </LargeBtn>
          <LargeBtn $w={70} $ml={1}>
            <LargeIcon><IconQuickStyle /></LargeIcon>
            <Line>快速样式</Line>
            <Line><Caret /></Line>
          </LargeBtn>
          <SmallCol $ml={1}>
            <SmallRow><IconSlot><IconFill /></IconSlot>形状填充<Caret $ml={1} /></SmallRow>
            <SmallRow><IconSlot><IconOutline /></IconSlot>形状轮廓<Caret $ml={1} /></SmallRow>
            <SmallRow><IconSlot><IconEffect /></IconSlot>形状效果<Caret $ml={1} /></SmallRow>
          </SmallCol>
        </GroupFrame>
        <GroupFrame w={102} label="编辑" pl={14}>
          <SmallCol>
            <SmallRow><IconSlot><IconFind /></IconSlot>查找</SmallRow>
            <SmallRow><IconSlot><IconReplace /></IconSlot>替换<Caret $ml={9} /></SmallRow>
            <SmallRow><IconSlot><IconSelect /></IconSlot>选择<Caret $ml={-2} /></SmallRow>
          </SmallCol>
        </GroupFrame>
        <GroupFrame w={158} label="Adobe Acrobat" latin>
          <LargeBtn $w={90} $ml={8}>
            <LargeIcon><IconPdf /></LargeIcon>
            <Line>创建并共享</Line>
            <Line><Latin>Adobe PDF</Latin></Line>
          </LargeBtn>
          <LargeBtn $w={40} $ml={5}>
            <LargeIcon><IconSign /></LargeIcon>
            <Line>请求</Line>
            <Line>签名</Line>
          </LargeBtn>
        </GroupFrame>
        <GroupFrame w={84} label="保存">
          <LargeBtn $w={84}>
            <LargeIcon><IconCloud /></LargeIcon>
            <Line>保存到</Line>
            <Line>百度网盘</Line>
          </LargeBtn>
        </GroupFrame>
        <CollapseBtn><IconChevron /></CollapseBtn>
      </Ribbon>

      <Workspace>
        <ThumbPane>
          <ThumbNum>1</ThumbNum>
          <Thumb />
        </ThumbPane>
        <PaneDivider />
        <EditPane>
          <SlideArea>
            <Slide>
              <Placeholder $l={160} $t={382} $w={973} $h={177}>
                <SubtitleText>单击此处添加副标题</SubtitleText>
              </Placeholder>
              <Placeholder $l={161} $t={119} $w={972} $h={255}>
                <RotateStem />
                <RotateGrip><IconRotate /></RotateGrip>
                <TextCursor />
                {handleSpots.map(([x, y]) => <Handle key={`${x}-${y}`} $x={x} $y={y} />)}
              </Placeholder>
            </Slide>
          </SlideArea>
          <Notes>单击此处添加备注</Notes>
        </EditPane>
      </Workspace>

      <StatusBar>
        <StatusItem $ml={10} $text>幻灯片 第 1 张，共 1 张</StatusItem>
        <StatusItem $ml={24}><IconBook /></StatusItem>
        <StatusItem $ml={22} $text>中文(中国)</StatusItem>
        <Spacer />
        <StatusItem $gap={5} $text><IconNotesUp />备注</StatusItem>
        <StatusItem $ml={25} $gap={3} $text><IconComment />批注</StatusItem>
        <StatusItem $ml={24}>
          <ViewBtn $active><ViewNormal /></ViewBtn>
          <ViewBtn><ViewGrid /></ViewBtn>
          <ViewBtn><ViewRead /></ViewBtn>
          <ViewBtn><ViewShow /></ViewBtn>
        </StatusItem>
        <StatusItem $ml={7} $w={10} $text>−</StatusItem>
        <ZoomTrack><ZoomThumb /><ZoomTick /></ZoomTrack>
        <StatusItem $ml={5} $w={10} $text>+</StatusItem>
        <StatusItem $ml={17} $w={30} $text>81%</StatusItem>
        <StatusItem $ml={18}><IconFit /></StatusItem>
        <StatusItem $w={9} />
      </StatusBar>
      <Taskbar>
        <TaskSeg $ml={60} $w={430} $bg="#f3f3f3" />
        <TaskSeg $ml={552} $w={155} $bg="#5f6a6e" />
        <Clock>10:33</Clock>
      </Taskbar>

      <ArrowOverlay width="40" height="370" viewBox="0 0 40 370">
        <polygon points="15.5,6 23,25 19,24 34,366 33,366 12,24 7,25" fill="#ff3338" />
      </ArrowOverlay>

      <Watermark>
        <WmPaw width="360" height="170" viewBox="0 0 360 170">
          <g fill="#fff" stroke="#bbb" strokeWidth="2">
            <ellipse cx="135" cy="46" rx="13" ry="17" />
            <ellipse cx="159.5" cy="22" rx="13" ry="17.5" />
            <ellipse cx="189" cy="25" rx="13" ry="17" />
            <ellipse cx="209" cy="52" rx="13" ry="15" />
            <path d="M170 52c-12 0-16 12-26 22-8 8-15 16-15 26 0 12 10 13 22 13 8 0 12-3 19-3s11 3 19 3c12 0 25-2 25-14 0-11-10-19-18-27-9-9-14-20-26-20z" />
          </g>
        </WmPaw>
        <WmBai>Bai</WmBai>
        <WmDu>du</WmDu>
        <WmJing>经验</WmJing>
        <WmUrl>jingyan.baidu.com</WmUrl>
      </Watermark>
    </Page>
  );
}
